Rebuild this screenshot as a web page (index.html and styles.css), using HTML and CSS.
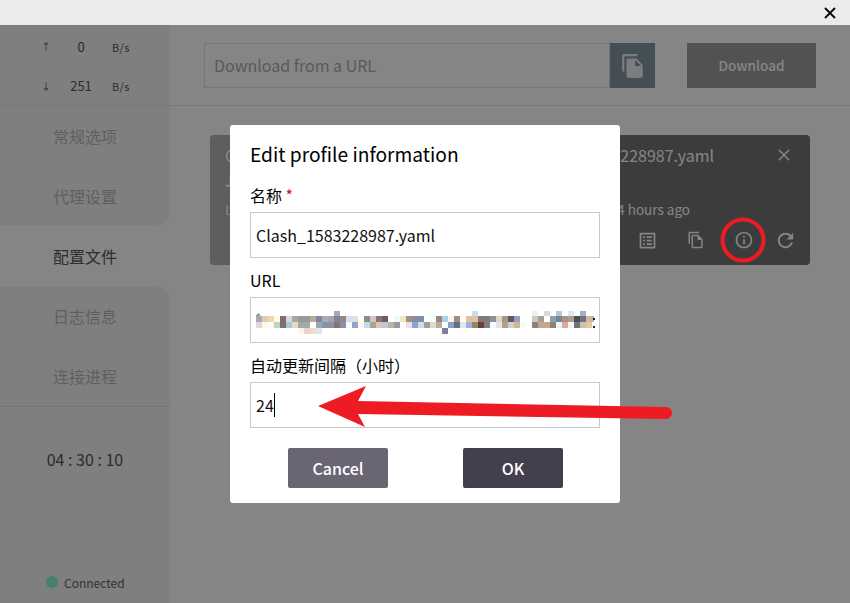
FILE: index.html
```html
<!DOCTYPE html>
<html lang="en">
<head>
  <meta charset="UTF-8" />
  <title>Clash Profiles</title>
  <link rel="stylesheet" href="styles.css">
</head>
<body>
  <div class="titlebar">
    <svg class="win-close" width="12" height="12" viewBox="0 0 12 12"><path d="M1 1l10 10M11 1L1 11"/></svg>
  </div>

  <div class="app">
    <aside class="sidebar">
      <div class="side-top">
        <div class="speed">
          <span class="arrow">↑</span><span class="val">0</span><span class="unit">B/s</span>
          <span class="arrow">↓</span><span class="val">251</span><span class="unit">B/s</span>
        </div>
        <div class="nav-item first">常规选项</div>
        <div class="nav-item">代理设置</div>
      </div>
      <div class="nav-item active">配置文件</div>
      <div class="side-bottom">
        <div class="nav-item tall">日志信息</div>
        <div class="nav-item tall">连接进程</div>
        <div class="uptime">04 : 30 : 10</div>
        <div class="status"><span class="dot"></span>Connected</div>
      </div>
    </aside>

    <main class="main">
      <div class="toolbar">
        <div class="url-box">Download from a URL</div>
        <div class="paste-btn">
          <svg width="26" height="26" viewBox="0 0 24 24"><path d="M16 1H4c-1.1 0-2 .9-2 2v14h2V3h12V1zm-1 4l6 6v10c0 1.1-.9 2-2 2H7.99C6.89 23 6 22.1 6 21l.01-14c0-1.1.89-2 1.99-2h7zm-1 7h5.5L14 6.5V12z"/></svg>
        </div>
        <div class="download-btn">Download</div>
      </div>

      <div class="content">
        <div class="card">
          <div class="card-row title-row">
            <span>C</span>
            <span class="card-name">Clash_1583228987.yaml</span>
            <svg class="card-close" width="12" height="12" viewBox="0 0 12 12"><path d="M.7.7l10.6 10.6M11.3.7L.7 11.3"/></svg>
          </div>
          <div class="card-row sub-row"><span>J</span></div>
          <div class="card-row time-row">
            <span>L</span>
            <span class="card-time">4 hours ago</span>
          </div>
          <div class="card-icons">
            <svg width="21" height="21" viewBox="0 0 24 24"><path d="M19 5v14H5V5h14m1.1-2H3.9c-.5 0-.9.4-.9.9v16.2c0 .4.4.9.9.9h16.2c.4 0 .9-.5.9-.9V3.9c0-.5-.5-.9-.9-.9zM11 7h6v2h-6V7zm0 4h6v2h-6v-2zm0 4h6v2h-6zM7 7h2v2H7zm0 4h2v2H7zm0 4h2v2H7z"/></svg>
            <svg width="18" height="18" viewBox="0 0 24 24"><path d="M16 1H4c-1.1 0-2 .9-2 2v14h2V3h12V1zm-1 4H8c-1.1 0-1.99.9-1.99 2L6 21c0 1.1.89 2 1.99 2H19c1.1 0 2-.9 2-2V11l-6-6zM8 21V7h6v5h5v9H8z"/></svg>
            <svg width="20" height="20" viewBox="0 0 24 24"><path d="M11 7h2v2h-2zm0 4h2v6h-2zm1-9C6.48 2 2 6.48 2 12s4.48 10 10 10 10-4.48 10-10S17.52 2 12 2zm0 18c-4.41 0-8-3.59-8-8s3.59-8 8-8 8 3.59 8 8-3.59 8-8 8z"/></svg>
            <svg width="23" height="23" viewBox="0 0 24 24"><path d="M17.65 6.35C16.2 4.9 14.21 4 12 4c-4.42 0-7.99 3.58-7.99 8s3.57 8 7.99 8c3.73 0 6.84-2.55 7.73-6h-2.08c-.82 2.33-3.04 4-5.65 4-3.31 0-6-2.69-6-6s2.69-6 6-6c1.66 0 3.14.69 4.22 1.78L13 11h7V4l-2.35 2.35z"/></svg>
          </div>
        </div>
      </div>
    </main>

    <div class="overlay">
      <div class="dialog">
        <h2>Edit profile information</h2>

        <label>名称 <em>*</em></label>
        <div class="field">Clash_1583228987.yaml</div>

        <label>URL</label>
        <div class="field">
          <!-- blurred address, 6px mosaic -->
          <svg class="mosaic" width="342" height="24" viewBox="0 0 342 24" shape-rendering="crispEdges">
            <path d="M0 5L3 1l1 4z" fill="#8e9aa0"/>
            <g>
              <rect x="78" y="0" width="6" height="5" fill="#aaaaaa"/>
              <rect x="216" y="0" width="6" height="5" fill="#c5e0ee"/>
              <rect x="276" y="0" width="6" height="5" fill="#eaf0f5"/>
              <rect x="288" y="0" width="6" height="5" fill="#dcd8d8"/>
              <rect x="300" y="0" width="6" height="5" fill="#b8c4dc"/>
              <rect x="312" y="0" width="6" height="5" fill="#dceaf5"/>
              <rect x="324" y="0" width="6" height="5" fill="#a8b0bc"/>
            </g>
            <g>
              <rect x="0" y="5" width="6" height="6" fill="#a5abb0"/><rect x="6" y="5" width="6" height="6" fill="#e0cdb0"/>
              <rect x="12" y="5" width="6" height="6" fill="#eed9ac"/><rect x="18" y="5" width="6" height="6" fill="#fcfbe4"/>
              <rect x="24" y="5" width="6" height="6" fill="#85697a"/><rect x="30" y="5" width="6" height="6" fill="#e0d8cf"/>
              <rect x="36" y="5" width="6" height="6" fill="#a3a8b8"/><rect x="42" y="5" width="6" height="6" fill="#999999"/>
              <rect x="48" y="5" width="6" height="6" fill="#999999"/><rect x="54" y="5" width="6" height="6" fill="#b8ab9c"/>
              <rect x="60" y="5" width="6" height="6" fill="#7f86a3"/><rect x="66" y="5" width="6" height="6" fill="#a9adb0"/>
              <rect x="72" y="5" width="6" height="6" fill="#a0a6aa"/><rect x="78" y="5" width="6" height="6" fill="#7f83a0"/>
              <rect x="84" y="5" width="6" height="6" fill="#9a8680"/><rect x="90" y="5" width="6" height="6" fill="#d5e0ec"/>
              <rect x="96" y="5" width="6" height="6" fill="#e0e2da"/><rect x="108" y="5" width="6" height="6" fill="#8f8c86"/>
              <rect x="114" y="5" width="6" height="6" fill="#d5c5bb"/><rect x="120" y="5" width="6" height="6" fill="#8a7278"/>
              <rect x="126" y="5" width="6" height="6" fill="#6e5a6e"/><rect x="138" y="5" width="6" height="6" fill="#eff8fd"/>
              <rect x="144" y="5" width="6" height="6" fill="#f2e5c8"/><rect x="150" y="5" width="6" height="6" fill="#9a9680"/>
              <rect x="156" y="5" width="6" height="6" fill="#8a8aa0"/><rect x="162" y="5" width="6" height="6" fill="#7a90a5"/>
              <rect x="174" y="5" width="6" height="6" fill="#fafafa"/><rect x="180" y="5" width="6" height="6" fill="#9a8680"/>
              <rect x="186" y="5" width="6" height="6" fill="#a8d4e8"/><rect x="192" y="5" width="6" height="6" fill="#fbf5e5"/>
              <rect x="198" y="5" width="6" height="6" fill="#a08a8a"/><rect x="210" y="5" width="6" height="6" fill="#e0bf9c"/>
              <rect x="216" y="5" width="6" height="6" fill="#e0c0a0"/><rect x="222" y="5" width="6" height="6" fill="#7f7a80"/>
              <rect x="228" y="5" width="6" height="6" fill="#7f7a80"/><rect x="234" y="5" width="6" height="6" fill="#909090"/>
              <rect x="240" y="5" width="6" height="6" fill="#e0d5c5"/><rect x="246" y="5" width="6" height="6" fill="#a09a88"/>
              <rect x="252" y="5" width="6" height="6" fill="#5f5860"/><rect x="258" y="5" width="6" height="6" fill="#8fa3c0"/>
              <rect x="276" y="5" width="6" height="6" fill="#d0c8bc"/><rect x="282" y="5" width="6" height="6" fill="#a0a098"/>
              <rect x="294" y="5" width="6" height="6" fill="#88a0bb"/><rect x="300" y="5" width="6" height="6" fill="#7a8590"/>
              <rect x="306" y="5" width="6" height="6" fill="#a89090"/><rect x="312" y="5" width="6" height="6" fill="#b09c88"/>
              <rect x="318" y="5" width="6" height="6" fill="#4e4e50"/><rect x="324" y="5" width="6" height="6" fill="#6f7480"/>
              <rect x="330" y="5" width="6" height="6" fill="#cfb89f"/><rect x="336" y="5" width="2" height="6" fill="#a3b5d0"/>
            </g>
            <g>
              <rect x="0" y="11" width="6" height="6" fill="#e0d8d8"/><rect x="6" y="11" width="6" height="6" fill="#fff4e6"/>
              <rect x="12" y="11" width="6" height="6" fill="#f8fafc"/><rect x="18" y="11" width="6" height="6" fill="#c5d0c5"/>
              <rect x="24" y="11" width="6" height="6" fill="#7f7070"/><rect x="30" y="11" width="6" height="6" fill="#a5c8dc"/>
              <rect x="36" y="11" width="6" height="6" fill="#e8d8bc"/><rect x="42" y="11" width="6" height="6" fill="#a0a8b0"/>
              <rect x="48" y="11" width="6" height="6" fill="#a0a8b0"/><rect x="60" y="11" width="6" height="6" fill="#a0a6a6"/>
              <rect x="66" y="11" width="6" height="6" fill="#7f95b5"/><rect x="72" y="11" width="6" height="6" fill="#9090a0"/>
              <rect x="78" y="11" width="6" height="6" fill="#8a7468"/><rect x="84" y="11" width="6" height="6" fill="#8a8ea8"/>
              <rect x="90" y="11" width="6" height="6" fill="#fbf9f5"/><rect x="96" y="11" width="6" height="6" fill="#8da4cc"/>
              <rect x="102" y="11" width="6" height="6" fill="#fff8e8"/><rect x="108" y="11" width="6" height="6" fill="#c0dcec"/>
              <rect x="114" y="11" width="6" height="6" fill="#a8a498"/><rect x="120" y="11" width="6" height="6" fill="#e0c5a8"/>
              <rect x="126" y="11" width="6" height="6" fill="#c0c8d8"/><rect x="132" y="11" width="6" height="6" fill="#c0b0b0"/>
              <rect x="138" y="11" width="6" height="6" fill="#9a9a9a"/><rect x="150" y="11" width="6" height="6" fill="#eee0dd"/>
              <rect x="156" y="11" width="6" height="6" fill="#8fa0d5"/><rect x="162" y="11" width="6" height="6" fill="#d8d8e2"/>
              <rect x="168" y="11" width="6" height="6" fill="#a0a0a0"/><rect x="174" y="11" width="6" height="6" fill="#e0d8cc"/>
              <rect x="180" y="11" width="6" height="6" fill="#b8aca0"/><rect x="192" y="11" width="6" height="6" fill="#8aa0c8"/>
              <rect x="198" y="11" width="6" height="6" fill="#6a7080"/><rect x="204" y="11" width="6" height="6" fill="#dfe8ec"/>
              <rect x="210" y="11" width="6" height="6" fill="#9fb0dc"/><rect x="216" y="11" width="6" height="6" fill="#90876a"/>
              <rect x="222" y="11" width="6" height="6" fill="#6a4030"/><rect x="228" y="11" width="6" height="6" fill="#808080"/>
              <rect x="234" y="11" width="6" height="6" fill="#f5fcfe"/><rect x="240" y="11" width="6" height="6" fill="#dfe6ee"/>
              <rect x="246" y="11" width="6" height="6" fill="#b0a088"/><rect x="252" y="11" width="6" height="6" fill="#d0d0cc"/>
              <rect x="258" y="11" width="6" height="6" fill="#d5b590"/><rect x="264" y="11" width="6" height="6" fill="#f0fbfb"/>
              <rect x="276" y="11" width="6" height="6" fill="#8f8080"/><rect x="282" y="11" width="6" height="6" fill="#c8a48c"/>
              <rect x="288" y="11" width="6" height="6" fill="#c8a890"/><rect x="294" y="11" width="6" height="6" fill="#8f8470"/>
              <rect x="300" y="11" width="6" height="6" fill="#e4f6fb"/><rect x="306" y="11" width="6" height="6" fill="#dca898"/>
              <rect x="312" y="11" width="6" height="6" fill="#f2f5f8"/><rect x="318" y="11" width="6" height="6" fill="#70747c"/>
              <rect x="324" y="11" width="6" height="6" fill="#d0c0b0"/><rect x="330" y="11" width="6" height="6" fill="#e5c89c"/>
            </g>
            <g>
              <rect x="42" y="17" width="6" height="6" fill="#fdf3e6"/><rect x="48" y="17" width="6" height="6" fill="#e8d4c4"/>
              <rect x="54" y="17" width="6" height="6" fill="#ecdcd0"/><rect x="60" y="17" width="6" height="6" fill="#e0e6ee"/>
              <rect x="186" y="17" width="6" height="6" fill="#7f7f9a"/>
            </g>
            <rect x="337" y="7" width="2" height="1.5" fill="#222222"/>
            <rect x="337" y="15" width="2" height="1.5" fill="#222222"/>
          </svg>
        </div>

        <label>自动更新间隔（小时）</label>
        <div class="field">24<span class="caret"></span></div>

        <div class="actions">
          <button class="btn cancel">Cancel</button>
          <button class="btn ok">OK</button>
        </div>
      </div>
    </div>

    <!-- red annotations drawn on top of the screenshot -->
    <svg class="marks" width="850" height="578" viewBox="0 25 850 578">
      <circle cx="743" cy="240" r="20.5"/>
      <path class="arrow-mark" d="M318 406L366 386L358 401L666 407a6 6 0 0 1 0 12L358 414L365 427z"/>
    </svg>
  </div>
</body>
</html>
```

FILE: styles.css
```css
* {
  box-sizing: border-box;
}

body {
  margin: 0;
  width: 850px;
  height: 603px;
  overflow: hidden;
  font-family: "Noto Sans CJK SC", "Noto Sans", sans-serif;
  color: #555;
  background: #fff;
}

.titlebar {
  height: 25px;
  background: #ebebeb;
  display: flex;
  align-items: center;
  justify-content: flex-end;
  padding-right: 14px;
}

.win-close path {
  stroke: #000;
  stroke-width: 1.8;
  fill: none;
}

.app {
  position: relative;
  display: flex;
  height: 578px;
}

/* sidebar */
.sidebar {
  width: 170px;
  display: flex;
  flex-direction: column;
}

.side-top {
  height: 200px;
  background: #f4f4f4;
  border-bottom-right-radius: 12px;
}

.side-bottom {
  flex: 1;
  background: #f4f4f4;
  border-top-right-radius: 12px;
  display: flex;
  flex-direction: column;
}

.speed {
  height: 81px;
  padding-top: 2px;
  border-bottom: 1px solid #e6e6e6;
  display: grid;
  grid-template-columns: 36px 20px 50px 1fr;
  grid-auto-rows: 39px;
  align-items: center;
}

.arrow {
  grid-column: 2;
  text-align: center;
  font-size: 10px;
  color: #555;
}

.val {
  text-align: center;
  font-size: 13px;
  color: #555;
}

.unit {
  padding-left: 6px;
  font-size: 11px;
  letter-spacing: 0.3px;
  color: #555;
}

.nav-item {
  height: 59.5px;
  padding-top: 2px;
  display: flex;
  align-items: center;
  justify-content: center;
  font-size: 16px;
  color: #b7b7b7;
}

.nav-item.first {
  padding-top: 0;
}

.nav-item.active {
  height: 62px;
  padding-top: 0;
  color: #585858;
}

.nav-item.tall {
  height: 60px;
  padding: 0 0 2px;
}

.uptime {
  border-top: 1px solid #e2e2e2;
  margin-top: -1px;
  height: 107px;
  padding-bottom: 2px;
  display: flex;
  align-items: center;
  justify-content: center;
  font-size: 16px;
  color: #555;
}

.status {
  margin-top: auto;
  height: 40px;
  padding: 0 0 2px 46px;
  display: flex;
  align-items: center;
  font-size: 12px;
  color: #626262;
}

.dot {
  width: 12px;
  height: 12px;
  margin-right: 6px;
  border-radius: 50%;
  background: #89f6cc;
}

/* main */
.main {
  flex: 1;
  background: #fff;
  display: flex;
  flex-direction: column;
}

.toolbar {
  height: 81px;
  padding: 18px 34px 0 34px;
  border-bottom: 1px solid #e6e6e6;
  display: flex;
  align-items: flex-start;
}

.url-box {
  width: 406px;
  height: 45px;
  padding: 0 0 2px 9px;
  border: 1px solid #e3e3e3;
  display: flex;
  align-items: center;
  font-size: 16px;
  color: #adadad;
}

.paste-btn {
  width: 45px;
  height: 45px;
  background: #8398a3;
  display: flex;
  align-items: center;
  justify-content: center;
}

.paste-btn path {
  fill: #fff;
  fill-opacity: 0.85;
}

.download-btn {
  width: 129px;
  height: 45px;
  margin-left: 32px;
  padding-bottom: 2px;
  background: #9e9e9e;
  display: flex;
  align-items: center;
  justify-content: center;
  font-size: 13.6px;
  font-weight: 500;
  color: #fff;
}

.content {
  padding: 29px 40px 0;
}

.card {
  width: 600px;
  height: 130px;
  padding: 8px 0 0 15px;
  border-radius: 4px;
  background: linear-gradient(90deg, #b5b5b5, #737373 60%);
  color: #fff;
  display: flex;
  flex-direction: column;
}

.card-row {
  display: flex;
  align-items: center;
}

.title-row {
  height: 24px;
  padding-right: 20px;
  font-size: 16px;
}

.card-name {
  margin-left: auto;
  white-space: nowrap;
}

.card-close {
  margin-left: 64px;
}

.card-close path {
  stroke: #fff;
  stroke-width: 1.5;
  fill: none;
}

.sub-row {
  height: 28px;
  font-size: 14px;
  font-weight: 700;
}

.time-row {
  height: 28px;
  padding-right: 120px;
  font-size: 13.5px;
}

.card-time {
  margin-left: auto;
}

.card-icons {
  height: 34px;
  padding-right: 13px;
  display: flex;
  align-items: center;
  justify-content: flex-end;
}

.card-icons svg {
  fill: #fff;
  margin-left: 29px;
}

.card-icons svg:last-child {
  margin-left: 20px;
}

/* dialog */
.overlay {
  position: absolute;
  inset: 0;
  background: rgba(0, 0, 0, 0.48);
  display: flex;
  align-items: center;
  justify-content: center;
}

.dialog {
  width: 390px;
  height: 378px;
  padding: 15px 20px 0;
  border-radius: 3px;
  background: #fff;
  color: #000;
}

.dialog h2 {
  margin: 0 0 17px;
  height: 28px;
  font-size: 19.2px;
  font-weight: 400;
  line-height: 28px;
}

.dialog label {
  display: block;
  height: 27px;
  line-height: 20px;
  font-size: 16px;
}

.dialog label em {
  font-style: normal;
  color: #e00;
}

.field {
  height: 46px;
  margin-bottom: 12px;
  padding-left: 5px;
  border: 1px solid #c8c8d4;
  display: flex;
  align-items: center;
  font-size: 16px;
  color: #111;
}

.mosaic {
  align-self: flex-start;
  margin-top: 13px;
  flex: none;
}

.caret {
  width: 1px;
  height: 24px;
  background: #000;
}

.actions {
  margin-top: 20px;
  padding-left: 38px;
  display: flex;
  gap: 75px;
}

.btn {
  width: 100px;
  height: 40px;
  border: none;
  border-radius: 2px;
  font-family: inherit;
  font-size: 16px;
  font-weight: 500;
  color: #fff;
}

.btn.cancel {
  background: #696573;
}

.btn.ok {
  background: #433f4e;
}

/* annotations */
.marks {
  position: absolute;
  top: 0;
  left: 0;
}

.marks circle {
  fill: none;
  stroke: #ed1c24;
  stroke-width: 4;
}

.arrow-mark {
  fill: #ed1c24;
}
```
